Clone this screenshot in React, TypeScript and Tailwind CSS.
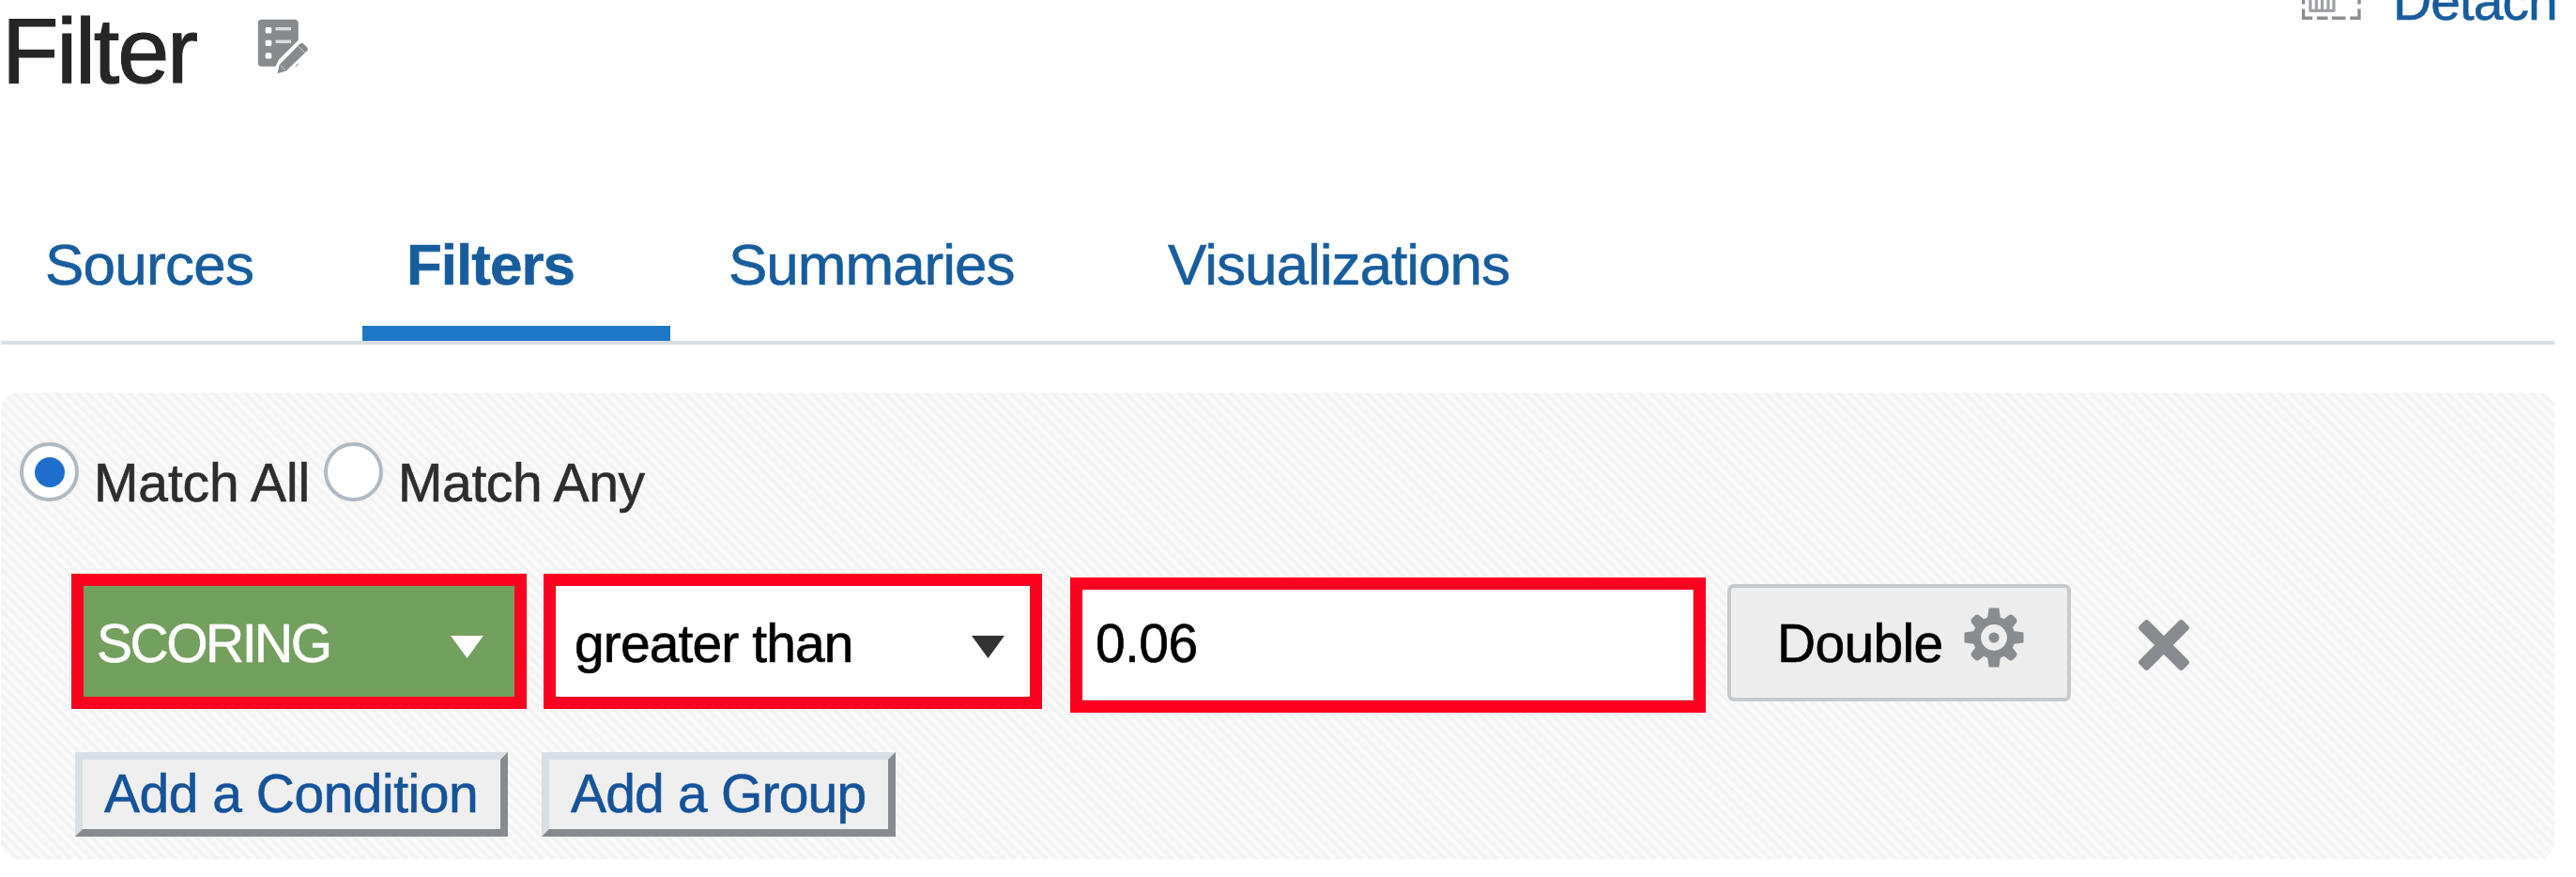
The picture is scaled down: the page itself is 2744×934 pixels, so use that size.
import React from "react";

const PANEL_STRIPES =
  "bg-[repeating-linear-gradient(45deg,#f9f9f9_0px,#f9f9f9_3px,#f2f2f2_5px,#f2f2f2_6px,#f9f9f9_7.9px)]";

function EditListIcon() {
  return (
    <svg className="mt-[18px] ml-[59px] h-[64px] w-[60px] shrink-0" viewBox="270 18 60 64">
      <rect x="274.8" y="20.8" width="43" height="50" rx="4" fill="#888b8e" />
      <g fill="#fff">
        <rect x="282.7" y="29" width="6.6" height="6.4" rx="1.5" />
        <rect x="282.7" y="42.7" width="6.6" height="6.4" rx="1.5" />
        <rect x="282.7" y="56.2" width="6.6" height="6.4" rx="1.5" />
      </g>
      <g fill="#dcdedf">
        <rect x="293.6" y="29" width="16.4" height="3.4" />
        <rect x="293.6" y="42.6" width="16.4" height="3.4" />
      </g>
      <path d="M292.5 73 L297 63.5 L318 42.5 L330 42 L330 56 L304 80 L292 82 Z" fill="#fff" />
      <path
        d="M295.6 78.3 L297.6 69 L318.8 47.2 Q321.5 44.8 324 47.2 L326.8 50 Q329 52.2 326.8 54.6 L304.8 75.6 Z"
        fill="#888b8e"
      />
      <path d="M317.2 48.8 L325 56.4 M298.4 69.4 L304 74.8" stroke="#d0d2d3" strokeWidth="1" />
    </svg>
  );
}

function DetachIcon() {
  return (
    <svg className="h-[24px] w-[64px] shrink-0" viewBox="0 0 64 24">
      <g fill="#8b8e91">
        <path d="M0 0h3.3v4.4H0z M59.4 0h3.3v4.4h-3.3z" />
        <path d="M0 9.4h3.3v8.2h8v3.4H0z M59.4 9.4h3.3V21H51.3v-3.4h8.1z" />
        <path d="M16 17.6h11.6V21H16z M32 17.6h14.6V21H32z" />
      </g>
      <path
        d="M9 0V11.4H34V0 M15.4 0V11 M21.6 0V11 M28 0V11"
        fill="none"
        stroke="#a0a2a5"
        strokeWidth="3.2"
        strokeLinejoin="round"
      />
    </svg>
  );
}

function GearIcon() {
  const teeth = [0, 45, 90, 135, 180, 225, 270, 315];
  return (
    <svg className="h-[64px] w-[64px] shrink-0" viewBox="-32 -32 64 64">
      <g fill="#888c90">
        {teeth.map((angle) => (
          <path
            key={angle}
            d={
              angle % 90 === 0
                ? "M-7 -20 L-5.4 -31.5 H5.4 L7 -20 Z"
                : "M-6.6 -20 L-5.6 -28 Q-5 -31 -2 -31 H2 Q5 -31 5.6 -28 L6.6 -20 Z"
            }
            transform={`rotate(${angle})`}
          />
        ))}
        <circle r="5.6" />
      </g>
      <circle r="18.2" fill="none" stroke="#888c90" strokeWidth="8.6" />
    </svg>
  );
}

function RemoveIcon() {
  return (
    <svg className="h-[56px] w-[56px] shrink-0" viewBox="-28 -28 56 56">
      <g fill="#888b8f">
        <rect x="-33" y="-7" width="66" height="14" rx="3.5" transform="rotate(45)" />
        <rect x="-33" y="-7" width="66" height="14" rx="3.5" transform="rotate(-45)" />
      </g>
    </svg>
  );
}

function Caret({ className }: { className: string }) {
  return (
    <svg className={`h-[24px] w-[35px] shrink-0 ${className}`} viewBox="0 0 35 24">
      <path d="M0 0H35L17.5 24Z" fill="currentColor" />
    </svg>
  );
}

function Radio({ checked }: { checked?: boolean }) {
  return (
    <span className="flex size-[63px] shrink-0 items-center justify-center rounded-full border-4 border-[#b0bac3] bg-white">
      {checked && <span className="size-[32px] rounded-full bg-[#1f6ecd]" />}
    </span>
  );
}

export default function App() {
  return (
    <div className="h-[934px] w-[2744px] overflow-hidden bg-white font-['Liberation_Sans',Arial,sans-serif] text-[57px] leading-[64px] whitespace-nowrap [-webkit-text-stroke:0.6px_currentColor]">
      <header className="flex h-[230px] items-start">
        <h1 className="mt-[4px] ml-[2px] w-[209px] text-[99px] leading-[100px] tracking-[-2.2px] text-[#262626] [-webkit-text-stroke:1.2px_currentColor]">
          Filter
        </h1>
        <EditListIcon />
        <a className="ml-auto flex w-[292px] items-start text-[#175d9d]">
          <DetachIcon />
          <span className="-mt-[31px] ml-[33px] tracking-[-1px]">Detach</span>
        </a>
      </header>

      <nav className="ml-[1px] flex h-[137px] w-[2720px] border-b-4 border-[#d7dfe6] text-[62px] text-[#175d9d]">
        <a className="w-[385px] pt-[20px] pl-[47px] tracking-[-0.75px]">Sources</a>
        <a className="w-[328px] border-b-[16px] border-[#1f78c7] pt-[20px] pl-[47px] font-bold tracking-[-1px]">
          Filters
        </a>
        <a className="w-[469px] pt-[20px] pl-[62px] tracking-[-1px]">Summaries</a>
        <a className="pt-[20px] pl-[61px] tracking-[-1px]">Visualizations</a>
      </nav>

      <main className={`mt-[51px] ml-[1px] h-[497px] w-[2720px] rounded-[18px] pt-[53px] ${PANEL_STRIPES}`}>
        <div className="flex h-[140px] items-start pl-[20px] text-[#2d2d2d]">
          <Radio checked />
          <span className="mt-[11px] ml-[16px] w-[245px] tracking-[-0.15px]">Match All</span>
          <Radio />
          <span className="mt-[11px] ml-[16px] tracking-[-0.4px]">Match Any</span>
        </div>

        <div className="flex h-[190px] items-start pl-[75px] text-black">
          <div className="flex h-[144px] w-[485px] border-[13px] border-[#fc001f] bg-[#73a05e] pt-[29px] pl-[14px] text-white">
            <span className="w-[377px] tracking-[-2.5px]">SCORING</span>
            <Caret className="mt-[24px]" />
          </div>
          <div className="ml-[18px] flex h-[144px] w-[531px] border-[13px] border-[#fc001f] bg-white pt-[29px] pl-[20px]">
            <span className="w-[423px] tracking-[-0.9px]">greater than</span>
            <Caret className="mt-[24px] text-[#333]" />
          </div>
          <div className="mt-[4px] ml-[30px] h-[144px] w-[677px] border-[13px] border-[#fc001f] bg-white pt-[25px] pl-[14px] shadow-[inset_-1px_-1px_0_#c8c8c8]">
            <span className="tracking-[-0.6px]">0.06</span>
          </div>
          <button className="mt-[11px] ml-[23px] flex h-[125px] w-[366px] items-start rounded-[7px] border-4 border-[#c6cacc] bg-[#ededed] pt-[27px] pl-[49px]">
            <span className="w-[199px] text-left tracking-[-0.7px]">Double</span>
            <span className="-mt-[6px]">
              <GearIcon />
            </span>
          </button>
          <button className="mt-[48px] ml-[71px]">
            <RemoveIcon />
          </button>
        </div>

        <div className="flex items-start gap-[36px] pl-[79px] text-[#15539b]">
          <button className="flex h-[90px] w-[461px] items-start border-8 border-t-[#d7dfe5] border-r-[#878b8f] border-b-[#878b8f] border-l-[#d7dfe5] bg-[#efefef] pt-[4px] pl-[23px] tracking-[-0.5px]">
            Add a Condition
          </button>
          <button className="flex h-[90px] w-[377px] items-start border-8 border-t-[#d7dfe5] border-r-[#878b8f] border-b-[#878b8f] border-l-[#d7dfe5] bg-[#efefef] pt-[4px] pl-[23px] tracking-[-0.8px]">
            Add a Group
          </button>
        </div>
      </main>
    </div>
  );
}
